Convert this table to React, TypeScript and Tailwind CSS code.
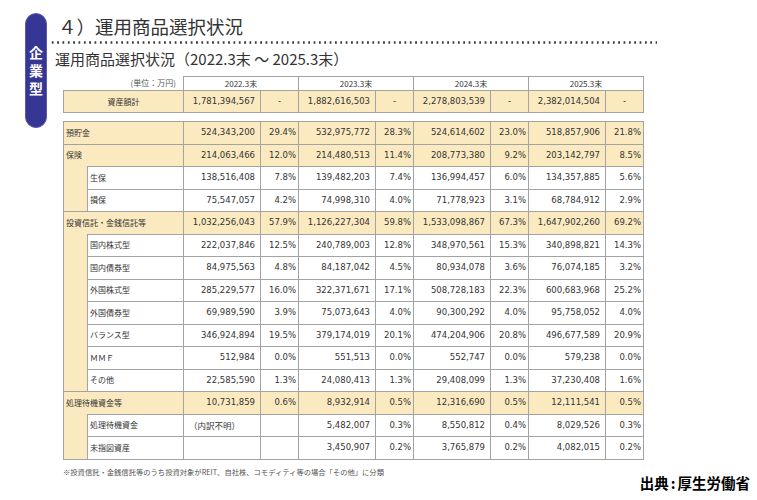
const years = ["2022.3末", "2023.3末", "2024.3末", "2025.3末"];

type Row = {
  label: string;
  cells: [string, string][];
  firstLeft?: boolean;
};

const groups: { parent: Row; children: Row[] }[] = [
  {
    parent: {
      label: "預貯金",
      cells: [["524,343,200", "29.4%"], ["532,975,772", "28.3%"], ["524,614,602", "23.0%"], ["518,857,906", "21.8%"]],
    },
    children: [],
  },
  {
    parent: {
      label: "保険",
      cells: [["214,063,466", "12.0%"], ["214,480,513", "11.4%"], ["208,773,380", "9.2%"], ["203,142,797", "8.5%"]],
    },
    children: [
      { label: "生保", cells: [["138,516,408", "7.8%"], ["139,482,203", "7.4%"], ["136,994,457", "6.0%"], ["134,357,885", "5.6%"]] },
      { label: "損保", cells: [["75,547,057", "4.2%"], ["74,998,310", "4.0%"], ["71,778,923", "3.1%"], ["68,784,912", "2.9%"]] },
    ],
  },
  {
    parent: {
      label: "投資信託・金銭信託等",
      cells: [["1,032,256,043", "57.9%"], ["1,126,227,304", "59.8%"], ["1,533,098,867", "67.3%"], ["1,647,902,260", "69.2%"]],
    },
    children: [
      { label: "国内株式型", cells: [["222,037,846", "12.5%"], ["240,789,003", "12.8%"], ["348,970,561", "15.3%"], ["340,898,821", "14.3%"]] },
      { label: "国内債券型", cells: [["84,975,563", "4.8%"], ["84,187,042", "4.5%"], ["80,934,078", "3.6%"], ["76,074,185", "3.2%"]] },
      { label: "外国株式型", cells: [["285,229,577", "16.0%"], ["322,371,671", "17.1%"], ["508,728,183", "22.3%"], ["600,683,968", "25.2%"]] },
      { label: "外国債券型", cells: [["69,989,590", "3.9%"], ["75,073,643", "4.0%"], ["90,300,292", "4.0%"], ["95,758,052", "4.0%"]] },
      { label: "バランス型", cells: [["346,924,894", "19.5%"], ["379,174,019", "20.1%"], ["474,204,906", "20.8%"], ["496,677,589", "20.9%"]] },
      { label: "ＭＭＦ", cells: [["512,984", "0.0%"], ["551,513", "0.0%"], ["552,747", "0.0%"], ["579,238", "0.0%"]] },
      { label: "その他", cells: [["22,585,590", "1.3%"], ["24,080,413", "1.3%"], ["29,408,099", "1.3%"], ["37,230,408", "1.6%"]] },
    ],
  },
  {
    parent: {
      label: "処理待機資金等",
      cells: [["10,731,859", "0.6%"], ["8,932,914", "0.5%"], ["12,316,690", "0.5%"], ["12,111,541", "0.5%"]],
    },
    children: [
      { label: "処理待機資金", firstLeft: true, cells: [["（内訳不明）", ""], ["5,482,007", "0.3%"], ["8,550,812", "0.4%"], ["8,029,526", "0.3%"]] },
      { label: "未指図資産", cells: [["", ""], ["3,450,907", "0.2%"], ["3,765,879", "0.2%"], ["4,082,015", "0.2%"]] },
    ],
  },
];

const num = "border border-[#a3a3a3] text-right pr-[5px] font-['DejaVu_Sans',sans-serif] text-[8.5px] text-[#333]";
const pct = "border border-[#a3a3a3] text-right pr-[2px] font-['DejaVu_Sans',sans-serif] text-[8.5px] text-[#333]";
const lab = "font-['Noto_Sans_CJK_JP','Noto_Sans',sans-serif] text-[8px] text-[#333]";

function ValueCells({ row, bg }: { row: Row; bg: string }) {
  return (
    <>
      {row.cells.map(([n, p], i) => (
        <>
          <td
            key={"n" + i}
            className={`${num} ${bg} ${i === 0 && row.firstLeft ? "!text-left pl-[5px] font-['Noto_Sans_CJK_JP',sans-serif]" : ""}`}
          >
            {n}
          </td>
          <td key={"p" + i} className={`${pct} ${bg}`}>
            {p}
          </td>
        </>
      ))}
    </>
  );
}

function Cols({ first }: { first: number[] }) {
  return (
    <colgroup>
      {first.map((w, i) => (
        <col key={"f" + i} style={{ width: w }} />
      ))}
      {years.map((y) => (
        <>
          <col key={y + "n"} style={{ width: 77 }} />
          <col key={y + "p"} style={{ width: 38 }} />
        </>
      ))}
    </colgroup>
  );
}

export default function App() {
  return (
    <div className="w-[757px] h-[500px] bg-white relative overflow-hidden font-['Noto_Sans_CJK_JP','Noto_Sans',sans-serif]">
      <div className="flex">
        {/* side pill */}
        <div className="pl-[25px] pt-[13px]">
          <div className="w-[22px] h-[115px] rounded-full bg-[#363694] border border-[#5a5ab0] flex items-center justify-center text-white font-bold text-[14px] leading-[20px]">
            <span className="[writing-mode:vertical-rl] tracking-[4px] pt-[4px]">企業型</span>
          </div>
        </div>

        <div className="ml-[3px] w-[607px]">
          <h1 className="pl-[8px] mt-[14px] text-[18.5px] leading-[24px] text-[#333] font-normal">４）運用商品選択状況</h1>
          <div className="mt-[3px] h-[3px] bg-[radial-gradient(circle,#333_1px,transparent_1.3px)] bg-[length:5.35px_3px]" />
          <div className="pl-[5px] mt-[6px] text-[15px] leading-[18px] text-[#333]">
            運用商品選択状況（2022.3末 ～ 2025.3末）
          </div>

          <div className="pl-[13px] mt-[8px]">
            <table className="table-fixed border-collapse w-[580px]">
              <Cols first={[120]} />
              <tbody>
                <tr className="h-[14px]">
                  <td className={`${lab} text-[7.5px] text-[#555] text-right pr-[7px]`}>(単位：万円)</td>
                  {years.map((y) => (
                    <td key={y} colSpan={2} className={`${lab} text-center border border-[#a3a3a3] leading-[12px]`}>
                      {y}
                    </td>
                  ))}
                </tr>
                <tr className="h-[22px]">
                  <td className={`${lab} border border-[#a3a3a3] bg-[#fbeac0] text-center`}>資産額計</td>
                  {["1,781,394,567", "1,882,616,503", "2,278,803,539", "2,382,014,504"].map((v) => (
                    <>
                      <td key={v} className={`${num} bg-[#fbeac0]`}>{v}</td>
                      <td key={v + "d"} className={`${num} bg-[#fbeac0] !text-center !pr-0`}>-</td>
                    </>
                  ))}
                </tr>
              </tbody>
            </table>

            <table className="table-fixed border-collapse w-[580px] mt-[8px]">
              <Cols first={[24, 96]} />
              <tbody>
                {groups.map((g) => (
                  <>
                    <tr key={g.parent.label} className="h-[22.5px]">
                      <td
                        colSpan={2}
                        className={`${lab} bg-[#fbeac0] border-t border-l border-r border-[#a3a3a3] pl-[2px] ${g.children.length ? "" : "border-b"}`}
                      >
                        {g.parent.label}
                      </td>
                      <ValueCells row={g.parent} bg="bg-[#fbeac0]" />
                    </tr>
                    {g.children.map((c, i) => (
                      <tr key={c.label} className="h-[22.5px]">
                        {i === 0 && (
                          <td
                            rowSpan={g.children.length}
                            className="bg-[#fbeac0] border-l border-r border-b border-[#a3a3a3]"
                          />
                        )}
                        <td className={`${lab} border border-[#a3a3a3] pl-[2px]`}>{c.label}</td>
                        <ValueCells row={c} bg="bg-white" />
                      </tr>
                    ))}
                  </>
                ))}
              </tbody>
            </table>

            <div className="mt-[7px] text-[7.3px] leading-[10px] text-[#555]">
              ※投資信託・金銭信託等のうち投資対象がREIT、自社株、コモディティ等の場合「その他」に分類
            </div>
          </div>
        </div>
      </div>

      <div className="absolute right-[7px] top-[474px] text-[14.5px] leading-[18px] font-bold text-black flex">
        <span>出典</span>
        <span className="mx-[2px]">:</span>
        <span>厚生労働省</span>
      </div>
    </div>
  );
}
